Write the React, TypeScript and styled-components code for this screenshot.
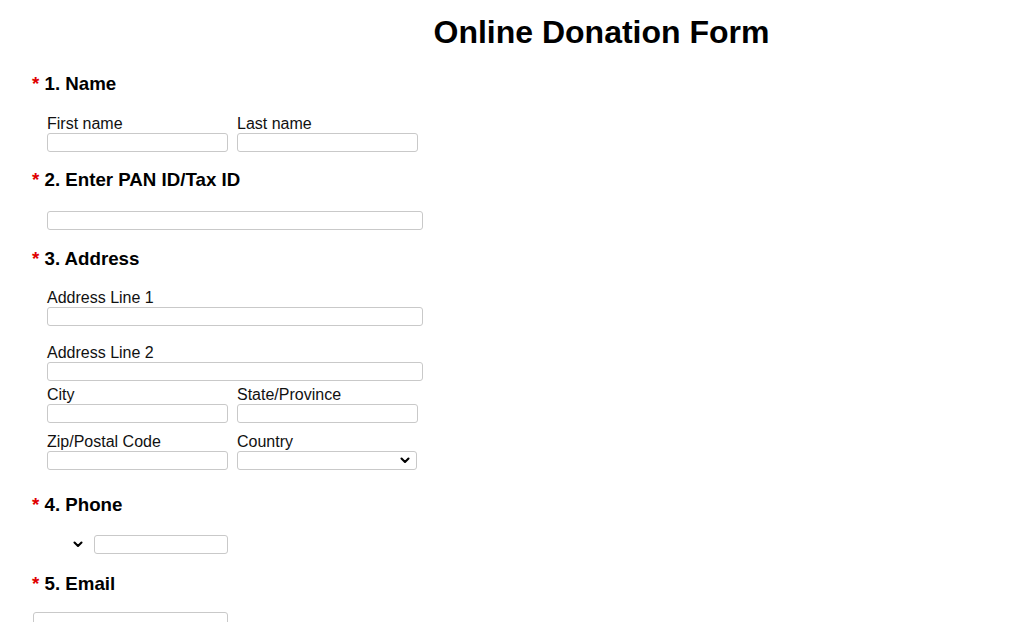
import React from "react";
import styled, { createGlobalStyle } from "styled-components";

const Global = createGlobalStyle`
  html, body { margin: 0; padding: 0; background: #fff; }
  body { font-family: "Liberation Sans", Arial, sans-serif; color: #000; }
`;

const Page = styled.div`
  padding: 14px 0 0 32px;
  overflow: hidden;
  height: 622px;
  box-sizing: border-box;
`;

const Title = styled.h1`
  margin: 0 0 22px 0;
  padding-left: 151px;
  font-size: 32px;
  line-height: 37px;
  font-weight: bold;
  text-align: center;
`;

const Heading = styled.h3<{ $mt?: number }>`
  margin: ${(p) => p.$mt ?? 0}px 0 0 0;
  font-size: 18.72px;
  line-height: 22px;
  font-weight: bold;
  white-space: pre;
`;

const Star = styled.span`
  color: #e00000;
`;

const Row = styled.div<{ $mt: number; $indent?: number }>`
  display: flex;
  gap: 9px;
  margin-top: ${(p) => p.$mt}px;
  padding-left: ${(p) => p.$indent ?? 15}px;
  align-items: flex-end;
`;

const Field = styled.div`
  display: flex;
  flex-direction: column;
`;

const Label = styled.label`
  font-size: 16px;
  line-height: 21px;
  margin-bottom: -1px;
  color: #111;
`;

const Input = styled.input<{ $w: number; $ml?: number }>`
  box-sizing: border-box;
  width: ${(p) => p.$w}px;
  height: 19px;
  margin: 0 0 0 ${(p) => p.$ml ?? 0}px;
  padding: 0 4px;
  border: 1px solid #c9c9c9;
  border-radius: 3px;
  background: #fff;
  font: 13px "Liberation Sans", Arial, sans-serif;
  outline: none;
`;

const SelectWrap = styled.div<{ $w: number; $bordered: boolean }>`
  position: relative;
  box-sizing: border-box;
  width: ${(p) => p.$w}px;
  height: 19px;
  border: ${(p) => (p.$bordered ? "1px solid #c9c9c9" : "1px solid transparent")};
  border-radius: 3px;
  background: #fff;
`;

const Select = styled.select`
  appearance: none;
  -webkit-appearance: none;
  width: 100%;
  height: 100%;
  border: none;
  background: transparent;
  margin: 0;
  padding: 0 4px;
  outline: none;
  font: 13px "Liberation Sans", Arial, sans-serif;
`;

const Chevron = styled.svg<{ $right: number }>`
  position: absolute;
  right: ${(p) => p.$right}px;
  top: 5px;
  pointer-events: none;
`;

function Arrow({ right }: { right: number }) {
  return (
    <Chevron $right={right} width="10" height="7" viewBox="0 0 10 7">
      <path d="M1.5 1.5 L5 5 L8.5 1.5" fill="none" stroke="#000" strokeWidth="2.1" strokeLinecap="round" strokeLinejoin="round" />
    </Chevron>
  );
}

export default function App() {
  return (
    <>
      <Global />
      <Page>
        <Title>Online Donation Form</Title>

        <Heading>
          <Star>*</Star> 1. Name
        </Heading>
        <Row $mt={18}>
          <Field>
            <Label>First name</Label>
            <Input $w={181} />
          </Field>
          <Field>
            <Label>Last name</Label>
            <Input $w={181} />
          </Field>
        </Row>

        <Heading $mt={17}>
          <Star>*</Star> 2. Enter PAN ID/Tax ID
        </Heading>
        <Row $mt={20}>
          <Input $w={376} />
        </Row>

        <Heading $mt={18}>
          <Star>*</Star> 3. Address
        </Heading>
        <Row $mt={17}>
          <Field>
            <Label>Address Line 1</Label>
            <Input $w={376} />
          </Field>
        </Row>
        <Row $mt={16}>
          <Field>
            <Label>Address Line 2</Label>
            <Input $w={376} />
          </Field>
        </Row>
        <Row $mt={3}>
          <Field>
            <Label>City</Label>
            <Input $w={181} />
          </Field>
          <Field>
            <Label>State/Province</Label>
            <Input $w={181} />
          </Field>
        </Row>
        <Row $mt={8}>
          <Field>
            <Label>Zip/Postal Code</Label>
            <Input $w={181} />
          </Field>
          <Field>
            <Label>Country</Label>
            <SelectWrap $w={180} $bordered>
              <Select defaultValue="">
                <option value=""></option>
              </Select>
              <Arrow right={6} />
            </SelectWrap>
          </Field>
        </Row>

        <Heading $mt={24}>
          <Star>*</Star> 4. Phone
        </Heading>
        <Row $mt={19} $indent={36}>
          <SelectWrap $w={22} $bordered={false}>
            <Select defaultValue="">
              <option value=""></option>
            </Select>
            <Arrow right={6} />
          </SelectWrap>
          <Input $w={134} $ml={-5} />
        </Row>

        <Heading $mt={19}>
          <Star>*</Star> 5. Email
        </Heading>
        <Row $mt={17} $indent={1}>
          <Input $w={195} />
        </Row>
      </Page>
    </>
  );
}
